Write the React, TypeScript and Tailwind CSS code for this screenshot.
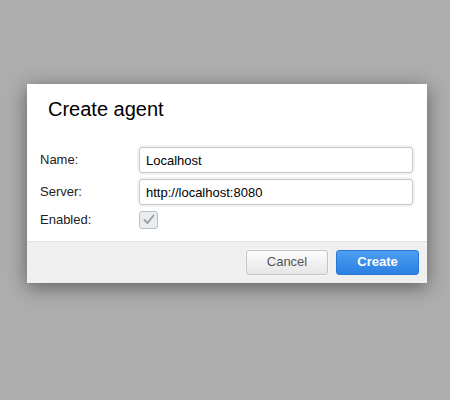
export default function App() {
  return (
    <div
      className="min-h-[400px] w-[450px] bg-[#adadad] pt-[84px] pl-[27px]"
      style={{ fontFamily: '"Liberation Sans", Arial, sans-serif' }}
    >
      <div className="w-[400px] bg-white shadow-[0_4px_18px_rgba(0,0,0,0.45)]">
        {/* Header */}
        <div className="pl-[21px] pt-[14px] pb-[26px]">
          <h1 className="text-[20px] leading-[23px] text-black">Create agent</h1>
        </div>

        {/* Form */}
        <div className="flex flex-col gap-[6px] pl-[13px] pr-[14px] pb-[11px]">
          <div className="flex items-center">
            <label className="w-[99px] text-[13px] text-[#222]">Name:</label>
            <input
              defaultValue="Localhost"
              className="h-[26px] flex-1 rounded-[3px] border border-[#c8c8c8] px-[6px] text-[13px] text-black outline-none shadow-[0_0_0_2px_#f3f3f3]"
              style={{ fontFamily: '"Liberation Sans", Arial, sans-serif' }}
            />
          </div>
          <div className="flex items-center">
            <label className="w-[99px] text-[13px] text-[#222]">Server:</label>
            <input
              defaultValue="http://localhost:8080"
              className="h-[26px] flex-1 rounded-[3px] border border-[#c8c8c8] px-[6px] text-[13px] text-black outline-none shadow-[0_0_0_2px_#f3f3f3]"
              style={{ fontFamily: '"Liberation Sans", Arial, sans-serif' }}
            />
          </div>
          <div className="flex items-center -mt-[1px]">
            <label className="w-[99px] text-[13px] text-[#222]">Enabled:</label>
            <span className="flex h-[18px] w-[19px] items-center justify-center rounded-[3px] border border-[#b9bec3] bg-[#e9edf0]">
              <svg width="12" height="11" viewBox="0 0 12 11">
                <path d="M1.5 6 L4.5 9 L10.5 1.5" fill="none" stroke="#9aa0a6" strokeWidth="2" strokeLinecap="round" strokeLinejoin="round" />
              </svg>
            </span>
          </div>
        </div>

        {/* Footer */}
        <div className="flex justify-end gap-[8px] border-t border-[#e2e2e2] bg-[#efefef] pt-[8px] pb-[8px] pr-[8px]">
          <button className="h-[25px] w-[82px] rounded-[3px] border border-[#c4c4c4] bg-gradient-to-b from-[#fcfcfc] to-[#e6e6e6] text-[13px] text-[#555] shadow-[0_0_0_1px_#f6f6f6]">
            Cancel
          </button>
          <button className="h-[25px] w-[83px] rounded-[3px] border border-[#2a78d6] bg-gradient-to-b from-[#4d9ff2] to-[#2a7fe2] text-[13px] font-bold text-white">
            Create
          </button>
        </div>
      </div>
    </div>
  );
}
